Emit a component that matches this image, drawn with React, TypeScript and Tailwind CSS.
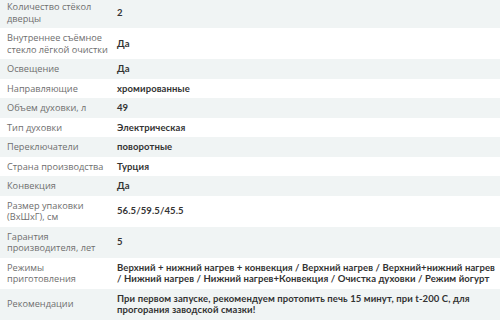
const rows: [string, string][] = [
  ["Количество стёкол дверцы", "2"],
  ["Внутреннее съёмное стекло лёгкой очистки", "Да"],
  ["Освещение", "Да"],
  ["Направляющие", "хромированные"],
  ["Объем духовки, л", "49"],
  ["Тип духовки", "Электрическая"],
  ["Переключатели", "поворотные"],
  ["Страна производства", "Турция"],
  ["Конвекция", "Да"],
  ["Размер упаковки (ВхШхГ), см", "56.5/59.5/45.5"],
  ["Гарантия производителя, лет", "5"],
  [
    "Режимы приготовления",
    "Верхний + нижний нагрев + конвекция / Верхний нагрев / Верхний+нижний нагрев / Нижний нагрев / Нижний нагрев+Конвекция / Очистка духовки / Режим йогурт",
  ],
  [
    "Рекомендации",
    "При первом запуске, рекомендуем протопить печь 15 минут, при t-200 С, для прогорания заводской смазки!",
  ],
];

export default function App() {
  return (
    <div className="w-[500px] h-[327px] overflow-hidden bg-white">
      <div className="-mt-[3px] flex flex-col">
        {rows.map(([label, value], i) => (
          <div
            key={label}
            className={`grid grid-cols-[117px_1fr] items-center py-[4px] leading-[11.5px] ${
              i % 2 === 0 ? "bg-[#f0f4f4]" : "bg-white"
            }`}
          >
            <div className="pl-[7px] pr-[2px] font-['Open_Sans',sans-serif] text-[9.2px] text-[#6e6e6e]">
              {label}
            </div>
            <div className="pr-[1px] font-['Lato',sans-serif] text-[9.5px] font-bold tracking-[0.1px] text-[#333]">
              {value}
            </div>
          </div>
        ))}
      </div>
    </div>
  );
}
